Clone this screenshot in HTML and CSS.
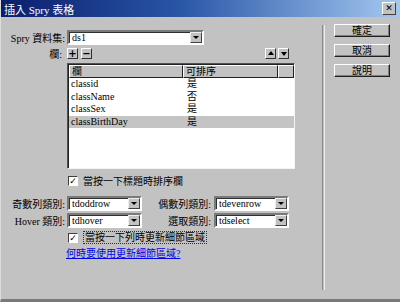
FILE: index.html
```html
<!DOCTYPE html>
<html lang="zh-Hant">
<head>
    <meta charset="UTF-8">
    <title>插入 Spry 表格</title>
    <link rel="stylesheet" href="styles.css">
</head>
<body>

<div class="dialog">
    <div class="titlebar">
        <span class="title">插入 Spry 表格</span>
        <span class="close">✕</span>
    </div>
    <div class="content">
        <div class="main">
            <!-- 資料集 -->
            <div class="row row-dataset">
                <label class="lbl">Spry 資料集:</label>
                <div class="select wide"><span class="val">ds1</span><span class="drop"></span></div>
            </div>

            <!-- 欄 按鈕 -->
            <div class="row row-cols">
                <label class="lbl">欄:</label>
                <span class="tool">+</span>
                <span class="tool">−</span>
                <span class="spacer"></span>
                <span class="tool arrow"><span class="tri up"></span></span>
                <span class="tool arrow"><span class="tri down"></span></span>
            </div>

            <!-- 欄 清單 -->
            <div class="list">
                <div class="list-head">
                    <div class="hcell c1">欄</div>
                    <div class="hcell c2">可排序</div>
                    <div class="hcell c3"></div>
                </div>
                <div class="list-row"><span class="c1">classid</span><span class="c2">是</span></div>
                <div class="list-row"><span class="c1">className</span><span class="c2">否</span></div>
                <div class="list-row"><span class="c1">classSex</span><span class="c2">是</span></div>
                <div class="list-row selected"><span class="c1">classBirthDay</span><span class="c2">是</span></div>
            </div>

            <div class="check-row first">
                <span class="checkbox">✓</span>
                <span>當按一下標題時排序欄</span>
            </div>

            <div class="row pair">
                <label class="lbl">奇數列類別:</label>
                <div class="select"><span class="val">tdoddrow</span><span class="drop"></span></div>
                <label class="lbl2">偶數列類別:</label>
                <div class="select"><span class="val">tdevenrow</span><span class="drop"></span></div>
            </div>
            <div class="row pair">
                <label class="lbl">Hover 類別:</label>
                <div class="select"><span class="val">tdhover</span><span class="drop"></span></div>
                <label class="lbl2">選取類別:</label>
                <div class="select"><span class="val">tdselect</span><span class="drop"></span></div>
            </div>

            <div class="check-row second">
                <span class="checkbox">✓</span>
                <span class="focus">當按一下列時更新細節區域</span>
            </div>

            <a class="help-link" href="#">何時要使用更新細節區域?</a>
        </div>

        <div class="sep"></div>

        <div class="buttons">
            <div class="btn">確定</div>
            <div class="btn">取消</div>
            <div class="btn">說明</div>
        </div>
    </div>
</div>

</body>
</html>
```

FILE: styles.css
```css
body {
    margin: 0;
    padding: 0;
    background-color: #c2c2c2;
    font-family: "Liberation Serif", "Noto Sans CJK TC", serif;
    font-size: 10px;
    color: #000;
}
.dialog {
    width: 400px;
    height: 302px;
    box-sizing: border-box;
    border-left: 1px solid #dcdcdc;
    border-bottom: 3px solid #7a7a7a;
    display: flex;
    flex-direction: column;
}
.titlebar {
    height: 17px;
    background: linear-gradient(to right, #0a1e6c 0%, #2a56a8 45%, #a4c8f0 100%);
    display: flex;
    align-items: center;
    padding: 0 4px 0 3px;
}
.title {
    color: #fff;
    font-size: 11px;
    flex: 1;
}
.close {
    width: 12px;
    height: 11px;
    background-color: #c2c2c2;
    border: 1px solid;
    border-color: #fff #404040 #404040 #fff;
    font-size: 9px;
    font-weight: bold;
    line-height: 11px;
    text-align: center;
    font-family: "DejaVu Sans", sans-serif;
}
.content {
    flex: 1;
    display: flex;
}
.main {
    width: 321px;
    padding-top: 13px;
    display: flex;
    flex-direction: column;
}
.row {
    display: flex;
    align-items: center;
}
.lbl {
    width: 64px;
    padding-right: 2px;
    text-align: right;
    white-space: nowrap;
}
.lbl2 {
    width: 69px;
    padding-right: 3px;
    text-align: right;
    white-space: nowrap;
}

/* 下拉選單 */
.select {
    width: 75px;
    height: 15px;
    box-sizing: border-box;
    background-color: #fff;
    border: 2px solid;
    border-color: #7a7a7a #fff #fff #7a7a7a;
    box-shadow: inset 1px 1px 0 #303030;
    display: flex;
    align-items: stretch;
}
.select.wide {
    width: 137px;
}
.select .val {
    flex: 1;
    padding-left: 3px;
    line-height: 11px;
}
.select .drop {
    width: 10px;
    background-color: #c2c2c2;
    border: 1px solid;
    border-color: #eee #404040 #404040 #eee;
    position: relative;
}
.select .drop::after {
    content: "";
    position: absolute;
    left: 2px;
    top: 3px;
    border-left: 3px solid transparent;
    border-right: 3px solid transparent;
    border-top: 3px solid #000;
}

.row-dataset {
    height: 15px;
}
.row-cols {
    height: 12px;
    margin-top: 2px;
    padding-right: 31px;
}
.row-cols .lbl {
    width: 61px;
    padding-right: 5px;
}
.spacer {
    flex: 1;
}
.tool {
    width: 9px;
    height: 9px;
    margin-right: 3px;
    background-color: #c2c2c2;
    border: 1px solid;
    border-color: #fff #303030 #303030 #fff;
    font-family: "DejaVu Sans", sans-serif;
    font-weight: bold;
    font-size: 10px;
    line-height: 9px;
    text-align: center;
    position: relative;
}
.tool.arrow {
    margin-right: 2px;
}
.tri {
    position: absolute;
    left: 2px;
    border-left: 3px solid transparent;
    border-right: 3px solid transparent;
}
.tri.up {
    top: 2px;
    border-bottom: 4px solid #000;
}
.tri.down {
    top: 3px;
    border-top: 4px solid #000;
}

/* 欄 清單 */
.list {
    margin: 4px 0 0 66px;
    width: 228px;
    height: 106px;
    box-sizing: border-box;
    background-color: #fff;
    border: 1px solid;
    border-color: #505050 #f4f4f4 #f4f4f4 #505050;
    box-shadow: inset 1px 1px 0 #222;
}
.list-head {
    display: flex;
    height: 13px;
    margin: 1px 0 0 1px;
}
.hcell {
    box-sizing: border-box;
    background-color: #c2c2c2;
    border: 1px solid;
    border-color: #fff #202020 #202020 #fff;
    line-height: 11px;
    padding-left: 2px;
}
.list-head .c1 { width: 114px; }
.list-head .c2 { width: 95px; }
.list-head .c3 { width: 16px; }
.list-row {
    display: flex;
    height: 12.5px;
    line-height: 10px;
    margin-left: 1px;
    width: 225px;
    align-items: center;
}
.list-row .c1 {
    width: 114px;
    padding-left: 2px;
}
.list-row .c2 {
    padding-left: 2px;
}
.list-row.selected {
    background-color: #c4c4c4;
}

/* 核取方塊 */
.check-row {
    display: flex;
    align-items: center;
    margin-left: 67px;
}
.check-row.first {
    margin-top: 6px;
    height: 11px;
}
.check-row.second {
    margin-top: 3px;
    height: 13px;
}
.checkbox {
    width: 8px;
    height: 8px;
    margin-right: 5px;
    background-color: #fff;
    border: 1px solid;
    border-color: #404040 #fff #fff #404040;
    font-family: "DejaVu Sans", sans-serif;
    font-size: 9px;
    font-weight: bold;
    line-height: 8px;
    text-align: center;
}
.focus {
    border: 1px dotted #303030;
    padding: 0 1px;
    line-height: 11px;
}
.pair {
    height: 15px;
    margin-top: 2px;
}
.check-row.first + .pair {
    margin-top: 10px;
}
.help-link {
    margin: 4px 0 0 65px;
    color: #0000ee;
    line-height: 12px;
}

/* 分隔線 */
.sep {
    width: 1px;
    margin: 8px 0 9px;
    border-left: 1px solid #8a8a8a;
    border-right: 1px solid #ececec;
}

/* 右側按鈕 */
.buttons {
    display: flex;
    flex-direction: column;
    gap: 7px;
    padding: 7px 0 0 9px;
}
.btn {
    width: 54px;
    height: 11px;
    background-color: #c2c2c2;
    border: 1px solid;
    border-color: #fff #202020 #202020 #fff;
    box-shadow: inset -1px -1px 0 #808080;
    text-align: center;
    line-height: 11px;
}
```
